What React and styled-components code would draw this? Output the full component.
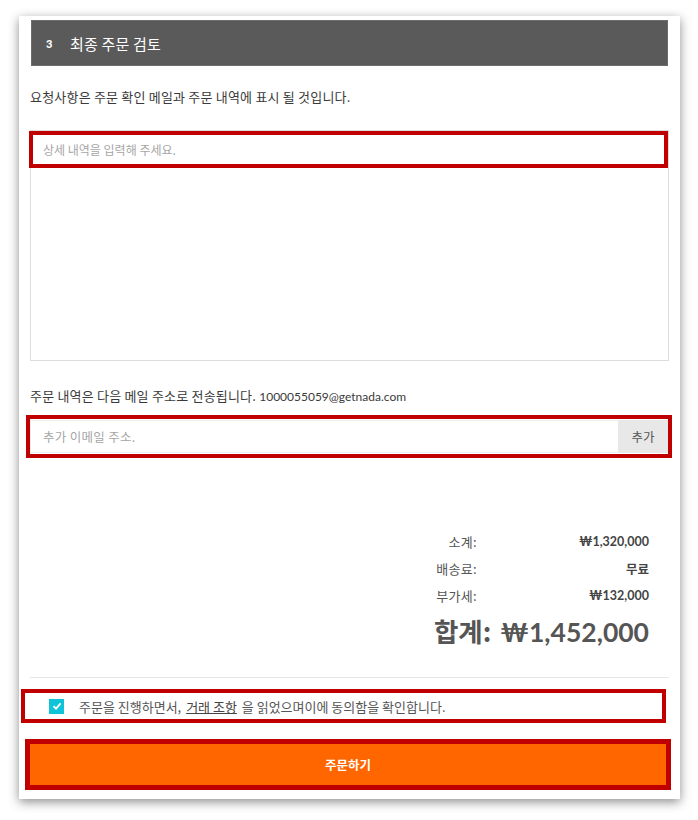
import React from 'react'
import styled, { createGlobalStyle } from 'styled-components';

const kr = `"Noto Sans CJK KR", "Noto Sans", sans-serif`;
const num = `Lato, "Noto Sans CJK KR", sans-serif`;

const GlobalStyle = createGlobalStyle`
  body {
    margin: 0;
    background: #ffffff;
    font-family: ${kr};
    color: #444444;
  }
  * { box-sizing: border-box; }
`;

const Page = styled.div`
  padding: 16px 0 21px 19px;
`;

const Card = styled.div`
  width: 661px;
  height: 783px;
  background: #ffffff;
  padding: 4px 11px 0 11px;
  box-shadow: 0 3px 10px rgba(0, 0, 0, 0.45);
  display: flex;
  flex-direction: column;
`;

const Header = styled.div`
  height: 46px;
  margin: 0 1px;
  background: #5a5a5a;
  border: 1px solid #6c6c6c;
  display: flex;
  align-items: center;
  padding-left: 14px;
  color: #ffffff;
`;

const StepNum = styled.span`
  font-family: ${num};
  font-size: 11px;
  font-weight: 900;
  width: 24px;
`;

const Title = styled.span`
  font-size: 15px;
  letter-spacing: 0.2px;
`;

const Note = styled.p`
  margin: 22px 0 0 0;
  font-size: 13px;
  letter-spacing: 0.2px;
  line-height: 18px;
  color: #3a3a3a;
  span { font-family: ${num}; font-size: 12px; letter-spacing: 0; }
`;

const NotesField = styled.div`
  position: relative;
  margin-top: 24px;
  height: 231px;
  border: 1px solid #dcdcdc;
`;

const NotesInput = styled.textarea`
  width: 100%;
  height: 100%;
  border: none;
  resize: none;
  outline: none;
  padding: 10px 12px;
  font-family: ${kr};
  font-size: 12px;
  &::placeholder { color: #a6a6a6; }
`;

const Marker = styled.div`
  position: absolute;
  top: 0;
  left: -2px;
  width: 639px;
  height: 37px;
  border: 4px solid #c00000;
  pointer-events: none;
`;

const Highlight = styled.div`
  border: ${p => p.$thick}px solid #c00000;
  margin-left: ${p => p.$left}px;
  width: ${p => p.$width}px;
  padding: ${p => p.$pad};
`;

const EmailRow = styled.div`
  display: flex;
  height: 33px;
`;

const EmailInput = styled.input`
  flex: 1;
  border: 1px solid #eeeeee;
  border-right: none;
  outline: none;
  padding: 0 12px;
  font-family: ${kr};
  font-size: 12.5px;
  letter-spacing: 0.3px;
  &::placeholder { color: #a6a6a6; }
`;

const AddButton = styled.button`
  width: 50px;
  border: none;
  background: #e8e8e8;
  color: #555555;
  font-family: ${kr};
  font-size: 12.5px;
`;

const Totals = styled.div`
  margin: 74px 20px 0 auto;
  width: 240px;
  display: grid;
  grid-template-columns: 1fr 172px;
  row-gap: 7px;
  align-items: center;
`;

const Label = styled.span`
  font-size: 13px;
  letter-spacing: 0.3px;
  line-height: 20px;
  text-align: right;
  color: #555555;
`;

const Value = styled.span`
  font-size: 12.5px;
  font-weight: 700;
  line-height: 20px;
  text-align: right;
  color: #444444;
  font-family: ${p => (p.$kr ? kr : num)};
`;

const Grand = styled.div`
  grid-column: 1 / 3;
  text-align: right;
  font-family: ${num};
  font-size: 26.5px;
  font-weight: 700;
  color: #555555;
  line-height: 36px;
  span { font-family: ${kr}; margin-right: 9px; }
`;

const Divider = styled.div`
  margin-top: 27px;
  border-top: 1px solid #e6e6e6;
`;

const AgreeRow = styled.label`
  display: flex;
  align-items: center;
  height: 26px;
  font-size: 13px;
  color: #555555;
  gap: 15px;
  a {
    color: #444444;
    text-decoration: underline;
    margin: 0 2px;
  }
`;

const Check = styled.span`
  width: 15px;
  height: 15px;
  background: #0fc3d9;
  display: flex;
  align-items: center;
  justify-content: center;
`;

const SubmitButton = styled.button`
  display: block;
  width: 100%;
  height: 41px;
  border: none;
  background: #ff6600;
  color: #ffffff;
  font-family: ${kr};
  font-size: 12.5px;
  font-weight: 700;
`;

export default function App() {
  return (
    <>
      <GlobalStyle />
      <Page>
        <Card>
          <Header>
            <StepNum>3</StepNum>
            <Title>최종 주문 검토</Title>
          </Header>
          <Note>요청사항은 주문 확인 메일과 주문 내역에 표시 될 것입니다.</Note>
          <NotesField>
            <NotesInput placeholder="상세 내역을 입력해 주세요." />
            <Marker />
          </NotesField>
          <Note style={{ marginTop: 26 }}>
            주문 내역은 다음 메일 주소로 전송됩니다. <span>1000055059@getnada.com</span>
          </Note>
          <Highlight $thick={4} $left={-4} $width={646} $pad="1px 0" style={{ marginTop: 9 }}>
            <EmailRow>
              <EmailInput placeholder="추가 이메일 주소." />
              <AddButton>추가</AddButton>
            </EmailRow>
          </Highlight>
          <Totals>
            <Label>소계:</Label>
            <Value>₩1,320,000</Value>
            <Label>배송료:</Label>
            <Value $kr>무료</Value>
            <Label>부가세:</Label>
            <Value>₩132,000</Value>
            <Grand><span>합계:</span>₩1,452,000</Grand>
          </Totals>
          <Divider />
          <Highlight $thick={4} $left={-9} $width={645} $pad="0 0 0 24px" style={{ marginTop: 11 }}>
            <AgreeRow>
              <Check>
                <svg width="10" height="10" viewBox="0 0 10 10">
                  <path d="M1.5 5.2 L4 7.6 L8.6 2.4" fill="none" stroke="#fff" strokeWidth="1.8" />
                </svg>
              </Check>
              <span>
                주문을 진행하면서, <a>거래 조항</a> 을 읽었으며이에 동의함을 확인합니다.
              </span>
            </AgreeRow>
          </Highlight>
          <Highlight $thick={5} $left={-5} $width={646} $pad="0" style={{ marginTop: 16 }}>
            <SubmitButton>주문하기</SubmitButton>
          </Highlight>
        </Card>
      </Page>
    </>
  );
}
